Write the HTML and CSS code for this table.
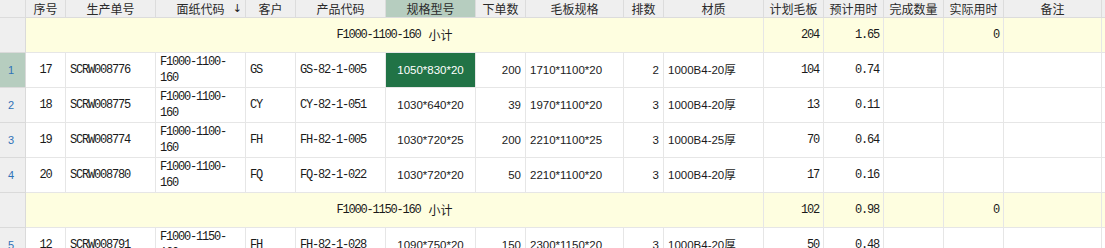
FILE: index.html
```html
<!DOCTYPE html>
<html lang="zh-CN">
<head>
<meta charset="utf-8">
<title>生产计划</title>
<link rel="stylesheet" href="styles.css">
</head>
<body>
<div class="sheet">
  <div class="row head">
    <div class="c rh"></div>
    <div class="c">序号</div>
    <div class="c">生产单号</div>
    <div class="c sort">面纸代码<span class="arrow">↓</span></div>
    <div class="c">客户</div>
    <div class="c">产品代码</div>
    <div class="c selcol">规格型号</div>
    <div class="c">下单数</div>
    <div class="c">毛板规格</div>
    <div class="c">排数</div>
    <div class="c">材质</div>
    <div class="c">计划毛板</div>
    <div class="c">预计用时</div>
    <div class="c">完成数量</div>
    <div class="c">实际用时</div>
    <div class="c">备注</div>
    <div class="c"></div>
  </div>

  <div class="row sub">
    <div class="c rh"></div>
    <div class="c label">F1000-1100-160 <span class="cjk">小计</span></div>
    <div class="c mono r">204</div>
    <div class="c mono r">1.65</div>
    <div class="c"></div>
    <div class="c mono r">0</div>
    <div class="c"></div>
    <div class="c"></div>
  </div>

  <div class="row">
    <div class="c rh selrow">1</div>
    <div class="c mono ctr">17</div>
    <div class="c mono">SCRW008776</div>
    <div class="c mono wrap">F1000-1100-160</div>
    <div class="c mono">GS</div>
    <div class="c mono">GS-82-1-005</div>
    <div class="c sans ctr active">1050*830*20</div>
    <div class="c sans r">200</div>
    <div class="c sans">1710*1100*20</div>
    <div class="c sans r">2</div>
    <div class="c sans">1000B4-20厚</div>
    <div class="c mono r">104</div>
    <div class="c mono r">0.74</div>
    <div class="c"></div>
    <div class="c"></div>
    <div class="c"></div>
    <div class="c"></div>
  </div>

  <div class="row">
    <div class="c rh">2</div>
    <div class="c mono ctr">18</div>
    <div class="c mono">SCRW008775</div>
    <div class="c mono wrap">F1000-1100-160</div>
    <div class="c mono">CY</div>
    <div class="c mono">CY-82-1-051</div>
    <div class="c sans ctr">1030*640*20</div>
    <div class="c sans r">39</div>
    <div class="c sans">1970*1100*20</div>
    <div class="c sans r">3</div>
    <div class="c sans">1000B4-20厚</div>
    <div class="c mono r">13</div>
    <div class="c mono r">0.11</div>
    <div class="c"></div>
    <div class="c"></div>
    <div class="c"></div>
    <div class="c"></div>
  </div>

  <div class="row">
    <div class="c rh">3</div>
    <div class="c mono ctr">19</div>
    <div class="c mono">SCRW008774</div>
    <div class="c mono wrap">F1000-1100-160</div>
    <div class="c mono">FH</div>
    <div class="c mono">FH-82-1-005</div>
    <div class="c sans ctr">1030*720*25</div>
    <div class="c sans r">200</div>
    <div class="c sans">2210*1100*25</div>
    <div class="c sans r">3</div>
    <div class="c sans">1000B4-25厚</div>
    <div class="c mono r">70</div>
    <div class="c mono r">0.64</div>
    <div class="c"></div>
    <div class="c"></div>
    <div class="c"></div>
    <div class="c"></div>
  </div>

  <div class="row">
    <div class="c rh">4</div>
    <div class="c mono ctr">20</div>
    <div class="c mono">SCRW008780</div>
    <div class="c mono wrap">F1000-1100-160</div>
    <div class="c mono">FQ</div>
    <div class="c mono">FQ-82-1-022</div>
    <div class="c sans ctr">1030*720*20</div>
    <div class="c sans r">50</div>
    <div class="c sans">2210*1100*20</div>
    <div class="c sans r">3</div>
    <div class="c sans">1000B4-20厚</div>
    <div class="c mono r">17</div>
    <div class="c mono r">0.16</div>
    <div class="c"></div>
    <div class="c"></div>
    <div class="c"></div>
    <div class="c"></div>
  </div>

  <div class="row sub">
    <div class="c rh"></div>
    <div class="c label">F1000-1150-160 <span class="cjk">小计</span></div>
    <div class="c mono r">102</div>
    <div class="c mono r">0.98</div>
    <div class="c"></div>
    <div class="c mono r">0</div>
    <div class="c"></div>
    <div class="c"></div>
  </div>

  <div class="row">
    <div class="c rh">5</div>
    <div class="c mono ctr">12</div>
    <div class="c mono">SCRW008791</div>
    <div class="c mono wrap">F1000-1150-160</div>
    <div class="c mono">FH</div>
    <div class="c mono">FH-82-1-028</div>
    <div class="c sans ctr">1090*750*20</div>
    <div class="c sans r">150</div>
    <div class="c sans">2300*1150*20</div>
    <div class="c sans r">3</div>
    <div class="c sans">1000B4-20厚</div>
    <div class="c mono r">50</div>
    <div class="c mono r">0.48</div>
    <div class="c"></div>
    <div class="c"></div>
    <div class="c"></div>
    <div class="c"></div>
  </div>
</div>
</body>
</html>
```

FILE: styles.css
```css
html, body {
  margin: 0;
  padding: 0;
  background: #ffffff;
}

body {
  width: 1105px;
  height: 248px;
  overflow: hidden;
  font-family: "Noto Sans CJK SC", sans-serif;
  color: #222;
}

.sheet {
  display: flex;
  flex-direction: column;
  width: 1200px;
}

.row {
  display: grid;
  grid-template-columns: 26px 40px 90px 90px 50px 90px 90px 50px 98px 40px 100px 60px 60px 60px 60px 98px 80px;
  height: 35px;
}

.c {
  box-sizing: border-box;
  border-right: 1px solid #e6e6e6;
  border-bottom: 1px solid #e6e6e6;
  padding: 0 4px;
  display: flex;
  align-items: center;
  font-size: 12px;
  line-height: 16px;
  white-space: nowrap;
  overflow: hidden;
}

.head {
  height: 18px;
}

.head .c {
  background: #efefef;
  border-right-color: #dcdcdc;
  border-bottom-color: #dcdcdc;
  justify-content: center;
  font-family: "Noto Sans CJK SC", sans-serif;
  font-size: 12px;
  color: #2a2a2a;
  line-height: 16px;
  padding: 0;
}

.head .sort {
  position: relative;
}

.arrow {
  position: absolute;
  right: 3px;
  top: 1px;
  font-family: "DejaVu Sans", sans-serif;
  font-size: 11px;
  color: #222;
}

.head .selcol {
  background: #b6cdbf;
}

.rh {
  background: #efefef;
  border-right-color: #dadada;
  border-bottom-color: #dadada;
  font-family: "Liberation Sans", sans-serif;
  font-size: 11px;
  color: #2f72b8;
  padding: 0 0 0 8px;
}

.rh.selrow {
  background: #b6cdbf;
}

.mono {
  font-family: "Liberation Mono", "Noto Sans CJK SC", monospace;
  font-size: 12px;
  letter-spacing: -1.2px;
  color: #1a1a1a;
}

.sans {
  font-family: "Liberation Sans", "Noto Sans CJK SC", sans-serif;
  font-size: 11.5px;
  color: #1a1a1a;
}

.r {
  justify-content: flex-end;
}

.ctr {
  justify-content: center;
}

.wrap {
  white-space: normal;
  word-break: normal;
}

.active {
  background: #217346;
  color: #ffffff;
}

.sub .c {
  background: #fefee0;
}

.sub .c.rh {
  background: #efefef;
}

.sub .label {
  grid-column: span 10;
  justify-content: center;
  white-space: pre;
  font-family: "Liberation Mono", "Noto Sans CJK SC", monospace;
  font-size: 12px;
  letter-spacing: -1.2px;
  color: #1a1a1a;
}

.cjk {
  font-family: "Noto Sans CJK SC", sans-serif;
  letter-spacing: 0;
  margin-left: 2px;
}
```
